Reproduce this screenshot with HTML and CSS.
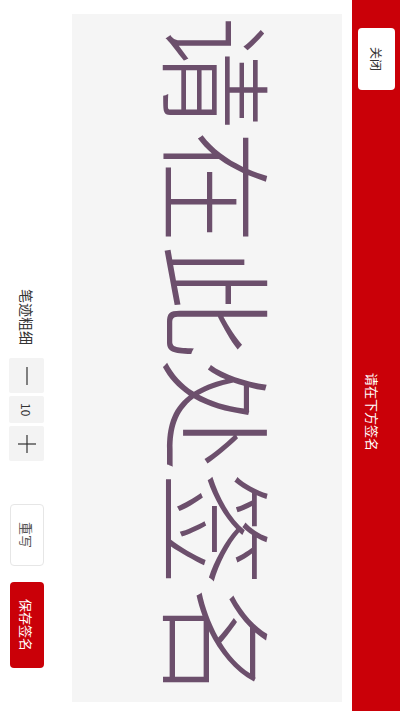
FILE: index.html
```html
<!DOCTYPE html>
<html lang="zh-CN">
<head>
    <meta charset="UTF-8">
    <title>签名</title>
    <link rel="stylesheet" href="styles.css">
</head>
<body>
<!-- Альбомная страница: вертикальный режим письма, текст повёрнут набок -->
<header class="top-bar">
    <button class="close-button">关闭</button>
    <div class="top-title">请在下方签名</div>
</header>

<!-- Поле для подписи -->
<div class="board">
    <div class="board-hint">请在此处签名</div>
</div>

<!-- Панель управления -->
<div class="toolbar">
    <span class="toolbar-label">笔迹粗细</span>
    <div class="stepper">
        <button class="stepper-btn">
            <svg width="18" height="18" viewBox="0 0 18 18"><line x1="9" y1="0" x2="9" y2="18" stroke="#333" stroke-width="1.2"/></svg>
        </button>
        <span class="stepper-value">10</span>
        <button class="stepper-btn">
            <svg width="18" height="18" viewBox="0 0 18 18"><line x1="0" y1="9" x2="18" y2="9" stroke="#333" stroke-width="1.2"/><line x1="9" y1="0" x2="9" y2="18" stroke="#333" stroke-width="1.2"/></svg>
        </button>
    </div>
    <button class="reset-button">重写</button>
    <button class="save-button">保存签名</button>
</div>
</body>
</html>
```

FILE: styles.css
```css
html {
    writing-mode: vertical-rl;
    text-orientation: sideways;
    background-color: #fff;
}

body {
    margin: 0;
    font-family: "Noto Sans CJK SC", "Noto Sans", sans-serif;
    inline-size: 711px;
    block-size: 400px;
    display: flex;
    flex-direction: column;
    overflow: hidden;
}

/* Красная полоса заголовка */
.top-bar {
    block-size: 48px;
    flex-shrink: 0;
    background-color: #ca0008;
    display: flex;
    align-items: center;
    padding-inline-start: 28px;
    box-sizing: border-box;
}

.close-button {
    inline-size: 62px;
    block-size: 37px;
    border: none;
    border-radius: 4px;
    background-color: #fff;
    color: #333;
    font-family: inherit;
    font-size: 12px;
    padding: 0;
}

.top-title {
    flex: 1;
    text-align: center;
    padding-inline-start: 23px;
    padding-block-start: 8px;
    color: #fff;
    font-size: 13px;
    line-height: 18px;
}

/* Поле для подписи */
.board {
    inline-size: 688px;
    block-size: 270px;
    flex-shrink: 0;
    margin-block-start: 10px;
    margin-inline-start: 14px;
    background-color: #f5f5f5;
    box-sizing: border-box;
    padding-block-start: 63px;
}

.board-hint {
    font-size: 114px;
    line-height: 115px;
    font-weight: 300;
    color: #6c4f6c;
    white-space: nowrap;
    padding-inline-start: 2px;
}

/* Панель управления */
.toolbar {
    display: flex;
    align-items: center;
    justify-content: flex-end;
    block-size: 37px;
    flex-shrink: 0;
    margin-block-start: 27px;
    padding-inline-end: 43px;
}

.toolbar-label {
    font-size: 14px;
    color: #333;
    margin-inline-end: 13px;
}

.stepper {
    display: flex;
    gap: 3px;
    margin-inline-end: 43px;
}

.stepper-btn,
.stepper-value {
    block-size: 35px;
    background-color: #f3f3f3;
    border: none;
    border-radius: 2px;
    display: flex;
    align-items: center;
    justify-content: center;
    padding: 0;
}

.stepper-btn {
    inline-size: 35px;
}

.stepper-value {
    inline-size: 27px;
    font-size: 12px;
    color: #333;
}

.reset-button,
.save-button {
    block-size: 34px;
    border-radius: 4px;
    font-family: inherit;
    font-size: 13px;
    padding: 0;
}

.reset-button {
    inline-size: 62px;
    background-color: #fff;
    border: 1px solid #e6e6e6;
    color: #555;
    margin-inline-end: 16px;
}

.save-button {
    inline-size: 86px;
    background-color: #ca0008;
    border: none;
    color: #fff;
}
```
